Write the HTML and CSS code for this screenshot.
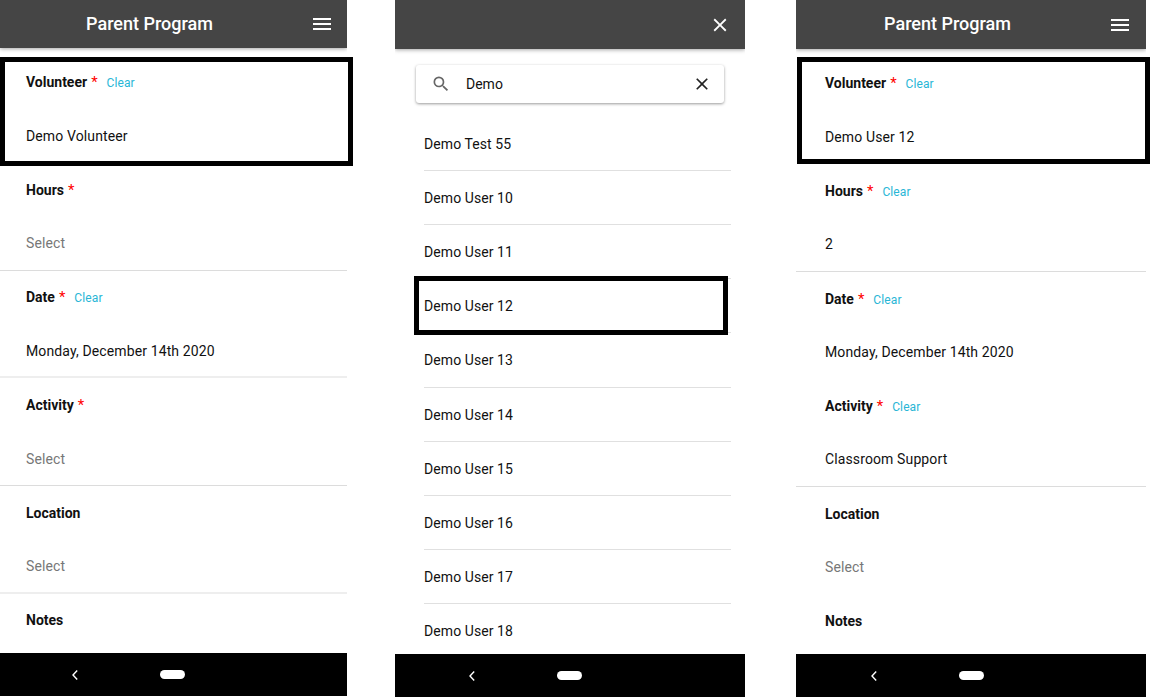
FILE: index.html
```html
<!DOCTYPE html>
<html lang="en">
<head>
<meta charset="utf-8">
<title>Parent Program</title>
<link rel="stylesheet" href="styles.css">
</head>
<body>
<main class="screens">
  <section class="phone phone-left">
    <header class="appbar">
      <span class="appbar-title">Parent Program</span>
      <svg class="menu-icon" viewBox="0 0 24 24" width="24" height="24"><path d="M3 18h18v-2H3v2zm0-5h18v-2H3v2zm0-7v2h18V6H3z"/></svg>
    </header>
    <div class="form">
      <div class="field"><div class="label"><b>Volunteer</b><i>*</i><a>Clear</a></div><div class="value">Demo Volunteer</div></div>
      <div class="field ruled"><div class="label"><b>Hours</b><i>*</i></div><div class="value muted">Select</div></div>
      <div class="field ruled soft"><div class="label"><b>Date</b><i>*</i><a>Clear</a></div><div class="value">Monday, December 14th 2020</div></div>
      <div class="field ruled"><div class="label"><b>Activity</b><i>*</i></div><div class="value muted">Select</div></div>
      <div class="field ruled soft"><div class="label"><b>Location</b></div><div class="value muted">Select</div></div>
      <div class="field"><div class="label"><b>Notes</b></div></div>
    </div>
    <footer class="navbar">
      <svg class="back-icon" viewBox="0 0 8 12" width="8" height="12"><path d="M6.2 1.5 2 6l4.2 4.5" fill="none" stroke="#fff" stroke-width="1.4"/></svg>
      <span class="home-pill"></span>
    </footer>
    <div class="focus focus-left"></div>
  </section>

  <section class="phone phone-mid">
    <header class="appbar appbar-end">
      <svg class="close-icon" viewBox="0 0 24 24" width="22" height="22"><path d="M19 6.41 17.59 5 12 10.59 6.41 5 5 6.41 10.59 12 5 17.59 6.41 19 12 13.41 17.59 19 19 17.59 13.41 12z"/></svg>
    </header>
    <div class="search">
      <svg class="search-icon" viewBox="0 0 24 24" width="20" height="20"><path d="M15.5 14h-.79l-.28-.27A6.47 6.47 0 0 0 16 9.5 6.5 6.5 0 1 0 9.5 16c1.61 0 3.09-.59 4.23-1.57l.27.28v.79l5 4.99L20.49 19l-4.99-5zm-6 0C7.01 14 5 11.99 5 9.5S7.01 5 9.5 5 14 7.01 14 9.5 11.99 14 9.5 14z"/></svg>
      <span class="search-text">Demo</span>
      <svg class="search-clear" viewBox="0 0 24 24" width="20" height="20"><path d="M19 6.41 17.59 5 12 10.59 6.41 5 5 6.41 10.59 12 5 17.59 6.41 19 12 13.41 17.59 19 19 17.59 13.41 12z"/></svg>
    </div>
    <ul class="results">
      <li>Demo Test 55</li>
      <li>Demo User 10</li>
      <li>Demo User 11</li>
      <li>Demo User 12</li>
      <li>Demo User 13</li>
      <li>Demo User 14</li>
      <li>Demo User 15</li>
      <li>Demo User 16</li>
      <li>Demo User 17</li>
      <li>Demo User 18</li>
    </ul>
    <footer class="navbar">
      <svg class="back-icon" viewBox="0 0 8 12" width="8" height="12"><path d="M6.2 1.5 2 6l4.2 4.5" fill="none" stroke="#fff" stroke-width="1.4"/></svg>
      <span class="home-pill"></span>
    </footer>
    <div class="focus focus-mid"></div>
  </section>

  <section class="phone phone-right">
    <header class="appbar">
      <span class="appbar-title">Parent Program</span>
      <svg class="menu-icon" viewBox="0 0 24 24" width="24" height="24"><path d="M3 18h18v-2H3v2zm0-5h18v-2H3v2zm0-7v2h18V6H3z"/></svg>
    </header>
    <div class="form">
      <div class="field"><div class="label"><b>Volunteer</b><i>*</i><a>Clear</a></div><div class="value">Demo User 12</div></div>
      <div class="field ruled"><div class="label"><b>Hours</b><i>*</i><a>Clear</a></div><div class="value">2</div></div>
      <div class="field"><div class="label"><b>Date</b><i>*</i><a>Clear</a></div><div class="value">Monday, December 14th 2020</div></div>
      <div class="field ruled"><div class="label"><b>Activity</b><i>*</i><a>Clear</a></div><div class="value">Classroom Support</div></div>
      <div class="field"><div class="label"><b>Location</b></div><div class="value muted">Select</div></div>
      <div class="field"><div class="label"><b>Notes</b></div></div>
    </div>
    <footer class="navbar">
      <svg class="back-icon" viewBox="0 0 8 12" width="8" height="12"><path d="M6.2 1.5 2 6l4.2 4.5" fill="none" stroke="#fff" stroke-width="1.4"/></svg>
      <span class="home-pill"></span>
    </footer>
    <div class="focus focus-right"></div>
  </section>
</main>
</body>
</html>
```
FILE: styles.css
```css
html, body {
  margin: 0;
  padding: 0;
  background: #fff;
  overflow: hidden;
}
body {
  font-family: Roboto, "Liberation Sans", sans-serif;
  color: #111;
}
.screens {
  display: flex;
  align-items: flex-start;
  width: 1150px;
  height: 698px;
  overflow: hidden;
}
.phone {
  flex: none;
  position: relative;
  display: flex;
  flex-direction: column;
  width: 350px;
  height: 697px;
}
.phone-left { width: 347px; height: 696px; }
.phone-mid { margin-left: 48px; }
.phone-right { margin-left: 51px; }
.appbar {
  flex: none;
  box-sizing: border-box;
  height: 49px;
  padding-right: 47px;
  background: #454545;
  box-shadow: 0 1px 4px rgba(0,0,0,.35);
  clip-path: inset(0 0 -6px 0);
  position: relative;
  z-index: 1;
  display: flex;
  align-items: center;
  justify-content: center;
}
.phone-left .appbar { height: 48px; padding-right: 48px; }
.appbar-end { justify-content: flex-end; padding-right: 0; }
.appbar-title {
  color: #fff;
  font-size: 18px;
  font-weight: 500;
  margin-bottom: 2px;
}
.menu-icon {
  position: absolute;
  right: 14px;
  top: 12.5px;
  fill: #fff;
}
.phone-left .menu-icon { right: 13px; top: 11.5px; }
.close-icon {
  fill: #fff;
  margin-right: 14px;
}
.form {
  flex: 1;
  min-height: 0;
  overflow: hidden;
  padding-top: 7.4px;
}
.phone-left .form { padding-top: 7.6px; }
.field {
  box-sizing: border-box;
  height: 107.6px;
  padding: 18px 26px 0;
}
.phone-left .field { padding-top: 17.6px; }
.phone-right .field { padding-left: 29px; }
.ruled { border-bottom: 1px solid #dcdcdc; }
.soft { border-bottom: 2px solid #eeeeee; }
.label {
  display: flex;
  align-items: baseline;
  height: 18px;
  line-height: 18px;
  font-size: 14px;
}
.label b { font-weight: 700; }
.label i {
  color: #f00;
  font-style: normal;
  font-size: 15px;
  margin-left: 4px;
}
.label a {
  color: #29b6d6;
  font-size: 12px;
  letter-spacing: .1px;
  margin-left: 9px;
}
.value {
  margin-top: 35.3px;
  height: 18px;
  line-height: 18px;
  font-size: 14px;
  letter-spacing: .12px;
}
.phone-left .value { margin-top: 35.7px; }
.muted { color: #777; }
.navbar {
  flex: none;
  height: 43px;
  background: #000;
  display: flex;
  align-items: center;
  padding-left: 74px;
}
.phone-left .navbar { padding-left: 71px; }
.phone-mid .navbar { padding-left: 73px; }
.home-pill {
  width: 25px;
  height: 9px;
  border-radius: 4.5px;
  background: #fff;
  margin-left: 81px;
}
.search {
  flex: none;
  box-sizing: border-box;
  width: 308px;
  height: 38px;
  margin: 16px 0 0 21px;
  padding: 0 12px 0 15px;
  background: #fff;
  border-radius: 3px;
  box-shadow: 0 1px 3px rgba(0,0,0,.4);
  display: flex;
  align-items: center;
}
.search-icon { fill: #666; flex: none; }
.search-text {
  flex: 1;
  margin-left: 15px;
  font-size: 14px;
}
.search-clear { fill: #222; flex: none; }
.results {
  flex: 1;
  min-height: 0;
  overflow: hidden;
  list-style: none;
  margin: 13.6px 0 0 29px;
  padding: 0;
  width: 307px;
}
.results li {
  box-sizing: border-box;
  height: 54.2px;
  line-height: 54px;
  font-size: 14px;
  letter-spacing: .08px;
  border-bottom: 1px solid #e0e0e0;
}
.focus {
  position: absolute;
  box-sizing: border-box;
  border: 5px solid #000;
  z-index: 2;
}
.focus-left { left: 0; top: 57px; width: 353px; height: 109px; }
.focus-mid { left: 19px; top: 276px; width: 314px; height: 59px; }
.focus-right { left: 1px; top: 57px; width: 353px; height: 107px; }
```
